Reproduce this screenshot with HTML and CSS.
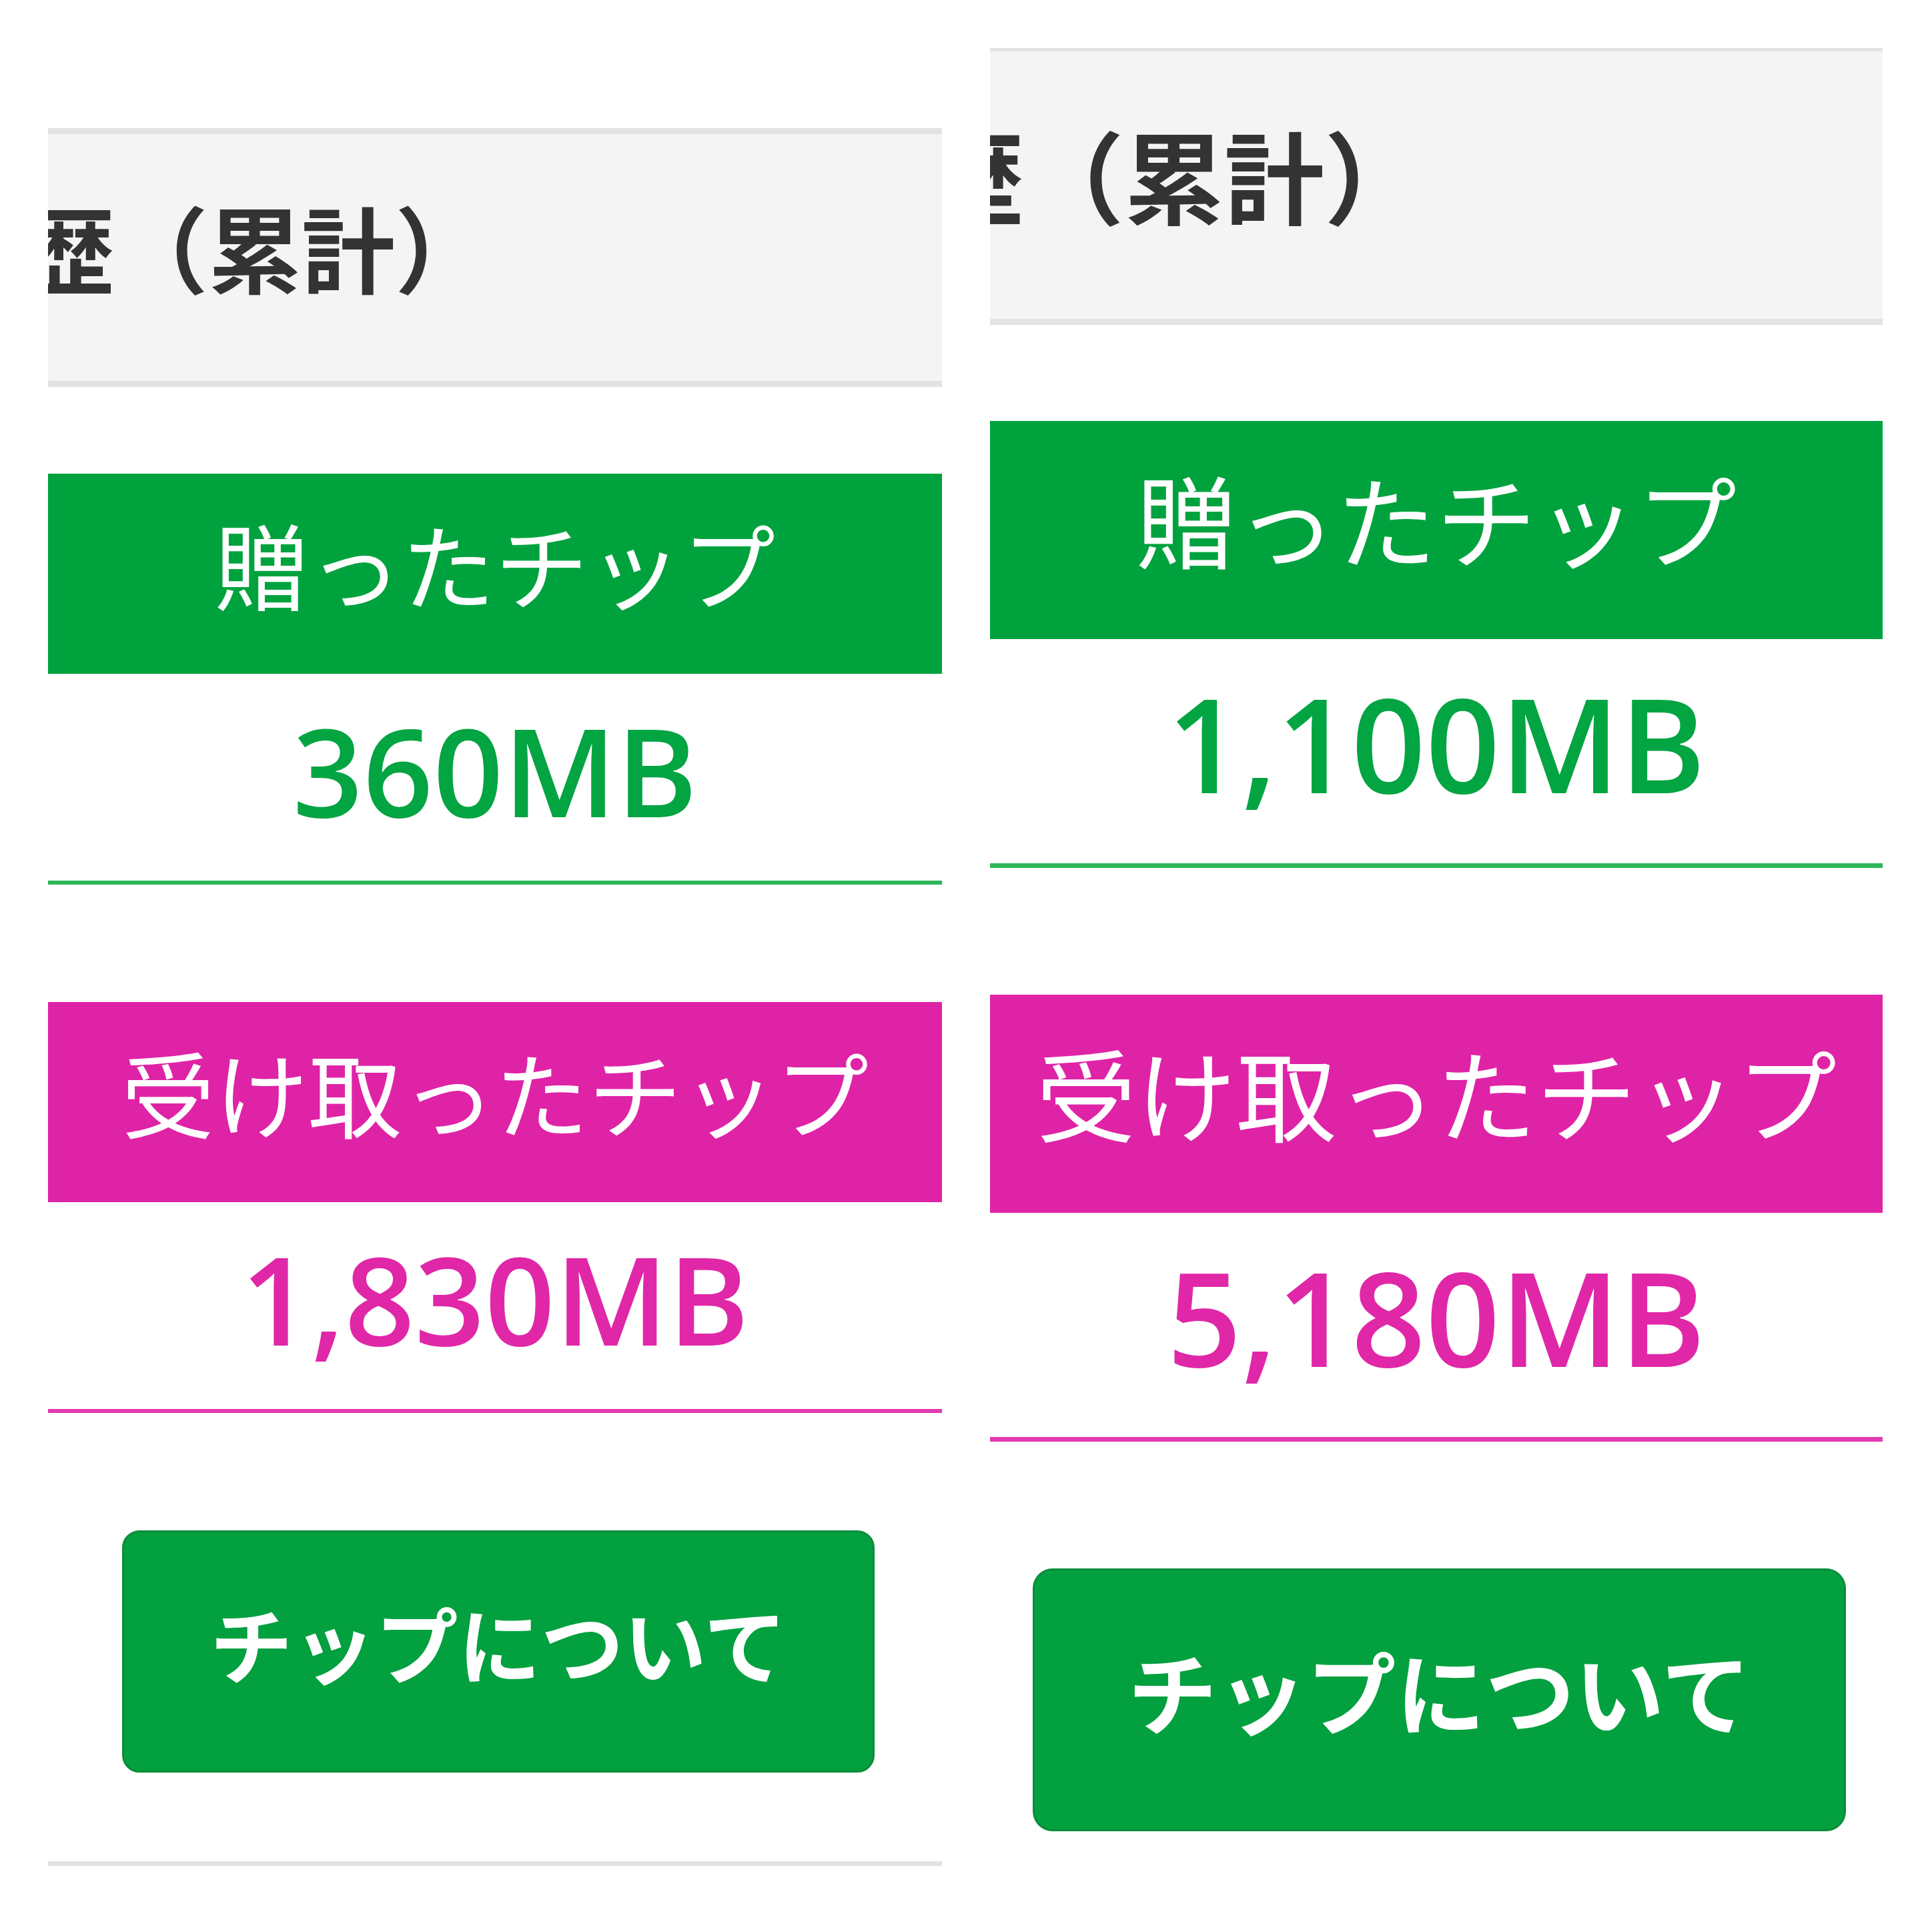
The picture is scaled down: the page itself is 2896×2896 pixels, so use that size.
FILE: index.html
```html
<!DOCTYPE html>
<html lang="ja">
<head>
  <meta charset="UTF-8" />
  <meta name="viewport" content="width=device-width, initial-scale=1.0" />
  <title>チップ履歴</title>
  <link rel="stylesheet" href="styles.css">
</head>
<body>
  <main class="collage">
    <section class="shot shot-left">
      <h2 class="history">履歴（累計）</h2>
      <div class="tip sent">
        <h3 class="tip-label">贈ったチップ</h3>
        <p class="tip-value">360MB</p>
      </div>
      <div class="tip received">
        <h3 class="tip-label">受け取ったチップ</h3>
        <p class="tip-value">1,830MB</p>
      </div>
      <a class="about" href="#">チップについて</a>
      <hr class="rule">
    </section>

    <section class="shot shot-right">
      <h2 class="history">履歴（累計）</h2>
      <div class="tip sent">
        <h3 class="tip-label">贈ったチップ</h3>
        <p class="tip-value">1,100MB</p>
      </div>
      <div class="tip received">
        <h3 class="tip-label">受け取ったチップ</h3>
        <p class="tip-value">5,180MB</p>
      </div>
      <a class="about" href="#">チップについて</a>
    </section>
  </main>
</body>
</html>
```

FILE: styles.css
```css
body {
  margin: 0;
  background-color: #fff;
  font-family: "Noto Sans CJK JP", sans-serif;
  color: #333;
}

.collage {
  display: flex;
  gap: 72px;
  padding-left: 72px;
  height: 2896px;
  overflow: hidden;
}

.shot {
  display: flex;
  flex-direction: column;
  overflow: hidden;
}

.history {
  margin: 0;
  background-color: #f4f4f4;
  border-top: 9px solid #e3e3e3;
  border-bottom: 9px solid #e3e3e3;
  font-weight: 700;
  color: #333;
  white-space: nowrap;
}

.tip-label {
  margin: 0;
  color: #fff;
  font-weight: 400;
  text-align: center;
  white-space: nowrap;
}

.tip-value {
  margin: 0;
  font-family: "Open Sans", sans-serif;
  font-weight: 600;
  text-align: center;
}

.sent .tip-label {
  background-color: #00a23e;
}

.sent .tip-value {
  color: #03a442;
  border-bottom: 6px solid #2db65a;
}

.received .tip-label {
  background-color: #df23a6;
}

.received .tip-value {
  color: #e027a8;
  border-bottom: 6px solid #e23bb0;
}

.about {
  display: flex;
  align-items: center;
  justify-content: center;
  box-sizing: border-box;
  background-color: #02a03e;
  border: 3px solid #0b8c39;
  color: #fff;
  font-weight: 700;
  text-decoration: none;
}

.rule {
  margin: 133px 0 0;
  height: 7px;
  border: none;
  background-color: #e2e2e2;
}

/* left screenshot */
.shot-left {
  width: 1340px;
  padding-top: 192px;
}

.shot-left .history {
  font-size: 140px;
  line-height: 334px;
  padding-bottom: 36px;
  text-indent: -180px;
}

.shot-left .sent {
  margin-top: 130px;
}

.shot-left .received {
  margin-top: 176px;
}

.shot-left .tip-label {
  font-size: 140px;
  line-height: 266px;
  padding-bottom: 34px;
}

.shot-left .tip-value {
  font-size: 184px;
  line-height: 288px;
  padding-bottom: 22px;
}

.shot-left .about {
  margin: 176px 0 0 111px;
  width: 1128px;
  height: 363px;
  padding-bottom: 30px;
  border-radius: 26px;
  font-size: 124px;
}

/* right screenshot, a closer crop */
.shot-right {
  width: 1338px;
  padding-top: 72px;
}

.shot-right .history {
  border-top-width: 5px;
  font-size: 150px;
  line-height: 365px;
  padding-bottom: 36px;
  text-indent: -249px;
}

.shot-right .sent {
  margin-top: 144px;
}

.shot-right .received {
  margin-top: 190px;
}

.shot-right .tip-label {
  font-size: 150px;
  line-height: 290px;
  padding-bottom: 37px;
}

.shot-right .tip-value {
  font-size: 195px;
  line-height: 312px;
  padding-bottom: 24px;
  border-bottom-width: 7px;
}

.shot-right .about {
  margin: 190px 0 0 64px;
  width: 1219px;
  height: 394px;
  padding-bottom: 31px;
  border-radius: 30px;
  font-size: 134px;
}
```
